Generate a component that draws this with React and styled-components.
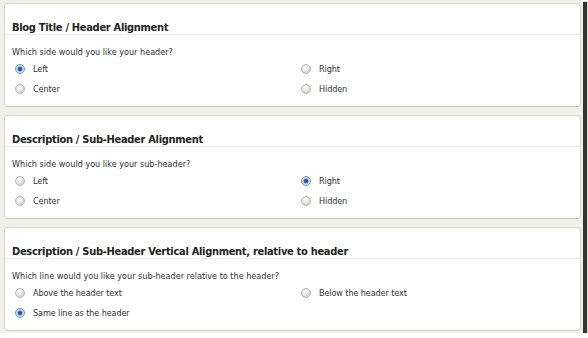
import React from "react";
import styled, { createGlobalStyle } from "styled-components";

const GlobalStyle = createGlobalStyle`
  html, body { margin: 0; padding: 0; background: #ffffff; }
  body { font-family: "DejaVu Sans Condensed", "DejaVu Sans", Verdana, sans-serif; }
`;

const Frame = styled.div`
  width: 583px;
  height: 333px;
  box-sizing: border-box;
  padding: 3px 2px 0 4px;
  background: #f1f0ea;
  display: flex;
  flex-direction: column;
  gap: 8px;
  box-shadow: 3px 3px 1px 1px #333333;
`;

const Panel = styled.section`
  height: 104px;
  box-sizing: border-box;
  background: #ffffff;
  border: 1px solid #d9d7ce;
  border-bottom-color: #cfcdc4;
  border-radius: 4px;
  display: flex;
  flex-direction: column;
`;

const Heading = styled.h2`
  margin: 18px 0 0;
  padding: 0 0 0 7px;
  font-size: 11px;
  line-height: 12px;
  font-weight: bold;
  color: #222222;
  letter-spacing: -0.3px;
  border-bottom: 1px solid #ebeae4;
`;

const Question = styled.p`
  margin: 11px 0 0;
  padding-left: 7px;
  font-size: 9px;
  line-height: 12px;
  color: #333333;
`;

const Options = styled.div`
  display: grid;
  grid-template-columns: 286px 1fr;
  grid-auto-rows: 20px;
  margin-top: 1px;
  padding-left: 10px;
`;

const Option = styled.label`
  display: flex;
  align-items: center;
  gap: 8px;
  font-size: 9px;
  letter-spacing: -0.1px;
  color: #333333;
`;

const Radio = styled.span`
  width: 8px;
  height: 8px;
  border-radius: 50%;
  border: 1px solid ${(p) => (p.$checked ? "#7d93a8" : "#b9b9b9")};
  background: ${(p) =>
    p.$checked
      ? "radial-gradient(circle at 50% 50%, #1d4f86 0, #2c64a0 1.8px, #a9c2da 2.6px, #e4ecf4 4px)"
      : "radial-gradient(circle at 40% 35%, #ffffff 0, #e9e9e9 3px, #cfcfcf 5px)"};
  flex: none;
`;

const sections = [
  {
    title: "Blog Title / Header Alignment",
    question: "Which side would you like your header?",
    options: [
      ["Left", true],
      ["Right", false],
      ["Center", false],
      ["Hidden", false],
    ],
  },
  {
    title: "Description / Sub-Header Alignment",
    question: "Which side would you like your sub-header?",
    options: [
      ["Left", false],
      ["Right", true],
      ["Center", false],
      ["Hidden", false],
    ],
  },
  {
    title: "Description / Sub-Header Vertical Alignment, relative to header",
    question: "Which line would you like your sub-header relative to the header?",
    options: [
      ["Above the header text", false],
      ["Below the header text", false],
      ["Same line as the header", true],
    ],
  },
];

export default function App() {
  return (
    <>
      <GlobalStyle />
      <Frame>
        {sections.map((s) => (
          <Panel key={s.title}>
            <Heading>{s.title}</Heading>
            <Question>{s.question}</Question>
            <Options>
              {s.options.map(([label, checked]) => (
                <Option key={label}>
                  <Radio $checked={checked} />
                  {label}
                </Option>
              ))}
            </Options>
          </Panel>
        ))}
      </Frame>
    </>
  );
}
